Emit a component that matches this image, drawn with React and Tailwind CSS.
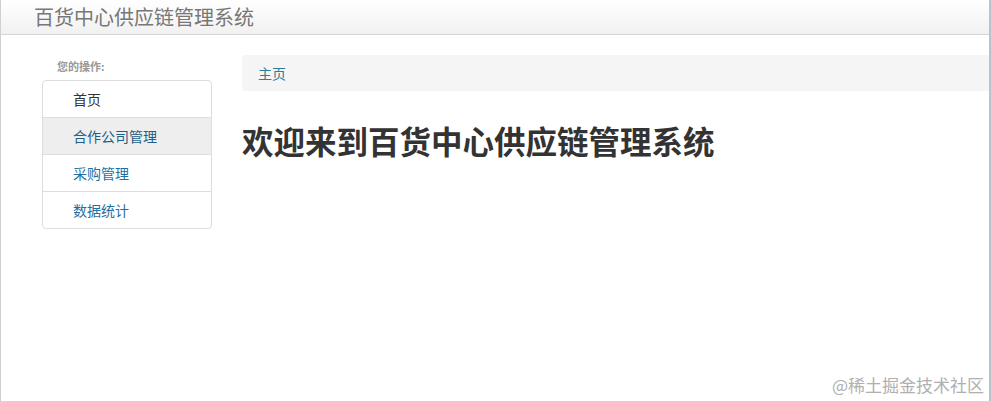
export default function App() {
  const font = { fontFamily: '"Noto Sans CJK SC", "Liberation Sans", sans-serif' };
  return (
    <div className="relative w-[991px] h-[401px] bg-white overflow-hidden border-l border-l-[#cfcfcf] border-r-2 border-r-[#b8c4cc]" style={font}>
      <div className="h-[35px] bg-gradient-to-b from-white to-[#f1f1f1] border-b border-[#d6d6d6] flex items-center pl-[33px]">
        <span className="text-[20px] text-[#777] leading-none">百货中心供应链管理系统</span>
      </div>
      <div className="flex pt-[20px]">
        <div className="w-[170px] ml-[41px] flex flex-col">
          <div className="text-[11px] font-bold text-[#999] pl-[15px] h-[25px] pt-[4px] leading-[14px]">您的操作:</div>
          <div className="border border-[#ddd] rounded-[4px] flex flex-col text-[14px] leading-none">
            <div className="h-[36px] flex items-center pl-[30px] text-[#333]">首页</div>
            <div className="h-[37px] flex items-center pl-[30px] text-[#1d5f86] bg-[#eee] border-t border-[#ddd]">合作公司管理</div>
            <div className="h-[37px] flex items-center pl-[30px] text-[#1f6fa0] border-t border-[#ddd]">采购管理</div>
            <div className="h-[37px] flex items-center pl-[30px] text-[#1f6fa0] border-t border-[#ddd]">数据统计</div>
          </div>
        </div>
        <div className="flex-1 ml-[30px]">
          <div className="h-[36px] bg-[#f5f5f5] rounded-l-[4px] flex items-center pl-[16px] text-[14px] text-[#2a7f96] leading-none">主页</div>
          <h1 className="mt-[34px] text-[31.5px] font-bold text-[#333] leading-none">欢迎来到百货中心供应链管理系统</h1>
        </div>
      </div>
      <div className="absolute right-[5px] bottom-[8px] text-[17px] text-[#b0b0b0] leading-none">@稀土掘金技术社区</div>
    </div>
  );
}
